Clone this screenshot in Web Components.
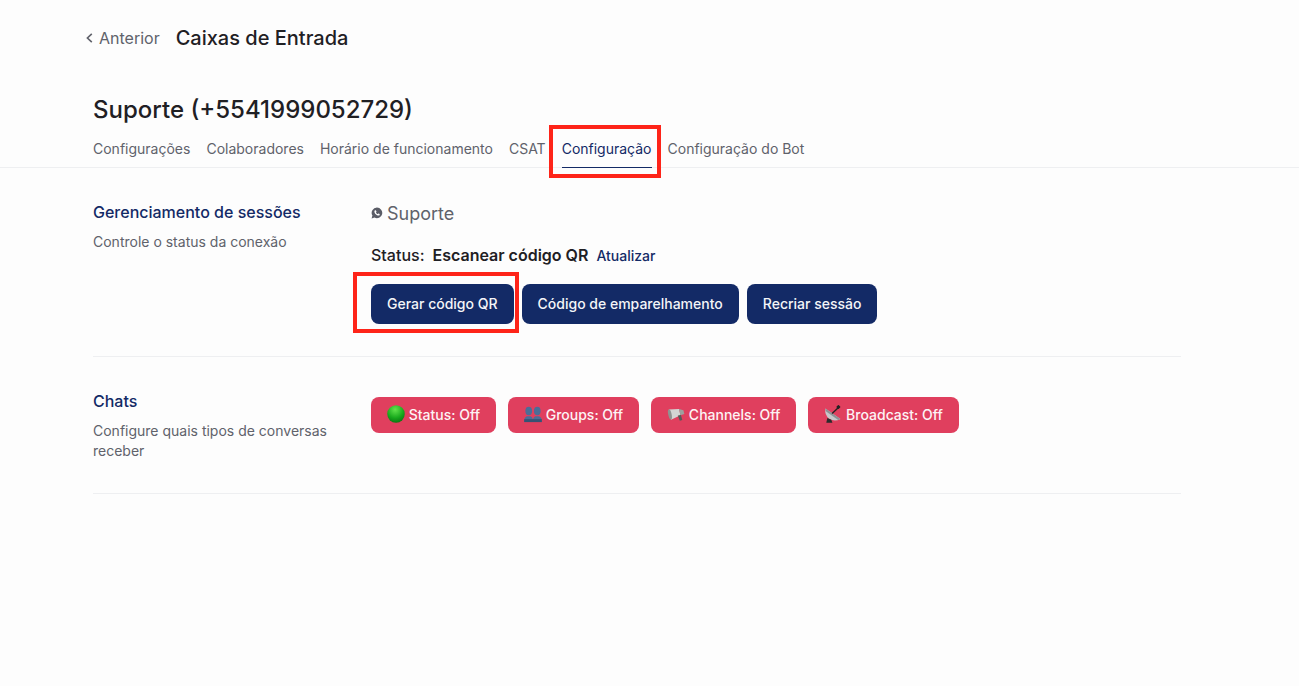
<!DOCTYPE html>
<html lang="pt-BR">
<head>
<meta charset="utf-8">
<title>Caixas de Entrada</title>
<style>
  html, body { margin: 0; height: 100%; }
  body {
    background: #fdfdfd;
    color: #1f2024;
    font-family: Inter, "Noto Sans", sans-serif;
    overflow: hidden;
  }
</style>
</head>
<body>
<inbox-page>
  <page-header back="Anterior" title-text="Caixas de Entrada"></page-header>
  <inbox-title name="Suporte (+5541999052729)"></inbox-title>
  <tab-bar>
    <tab-item>Configurações</tab-item>
    <tab-item>Colaboradores</tab-item>
    <tab-item>Horário de funcionamento</tab-item>
    <tab-item>CSAT</tab-item>
    <tab-item active marked>Configuração</tab-item>
    <tab-item>Configuração do Bot</tab-item>
  </tab-bar>
  <settings-section heading="Gerenciamento de sessões" style="--row-height:189px">
    <span slot="sub">Controle o status da conexão</span>
    <session-panel></session-panel>
  </settings-section>
  <settings-section heading="Chats" style="--row-height:137px">
    <span slot="sub">Configure quais tipos de conversas receber</span>
    <chat-toggles></chat-toggles>
  </settings-section>
</inbox-page>

<script>
class InboxPage extends HTMLElement {
  constructor() {
    super();
    this.attachShadow({ mode: 'open' }).innerHTML = `
      <style>
        :host { display: block; }
      </style>
      <slot></slot>
    `;
  }
}

class PageHeader extends HTMLElement {
  constructor() {
    super();
    this.attachShadow({ mode: 'open' }).innerHTML = `
      <style>
        :host {
          display: flex;
          align-items: center;
          height: 76px;
          padding-left: 85px;
        }
        .back {
          display: flex;
          align-items: center;
          gap: 4px;
          color: #60626b;
          font-size: 16px;
          margin-right: 16px;
        }
        svg { width: 10px; height: 14px; }
        h1 {
          margin: 0;
          font-size: 20px;
          font-weight: 500;
          color: #1f2024;
        }
      </style>
      <div class="back">
        <svg viewBox="0 0 10 14" fill="none" stroke="#60626b" stroke-width="1.6"><path d="M6.8 2.8 L2.4 7 L6.8 11.2"/></svg>
        <span>${this.getAttribute('back')}</span>
      </div>
      <h1>${this.getAttribute('title-text')}</h1>
    `;
  }
}

class InboxTitle extends HTMLElement {
  constructor() {
    super();
    this.attachShadow({ mode: 'open' }).innerHTML = `
      <style>
        :host {
          display: block;
          padding: 18px 0 0 93px;
          height: 37px;
          font-size: 24px;
          line-height: 32px;
          font-weight: 500;
          color: #1f2024;
        }
      </style>
      ${this.getAttribute('name')}
    `;
  }
}

class TabBar extends HTMLElement {
  constructor() {
    super();
    this.attachShadow({ mode: 'open' }).innerHTML = `
      <style>
        :host {
          display: flex;
          gap: 16px;
          height: 36px;
          padding-left: 93px;
          border-bottom: 1px solid #eeeff1;
        }
      </style>
      <slot></slot>
    `;
  }
}

class TabItem extends HTMLElement {
  constructor() {
    super();
    this.attachShadow({ mode: 'open' }).innerHTML = `
      <style>
        :host {
          display: block;
          position: relative;
          font-size: 14px;
          line-height: 20px;
          padding-top: 8px;
          color: #60626b;
        }
        :host([active]) { color: #132a66; }
        :host([active]) .line {
          position: absolute;
          left: 0;
          right: 0;
          bottom: -1px;
          height: 1px;
          background: #132a66;
        }
        mark-box { --inset: -6px -9px -11px -13px; }
      </style>
      <slot></slot>
      <div class="line"></div>
      ${this.hasAttribute('marked') ? '<mark-box></mark-box>' : ''}
    `;
  }
}

// red annotation rectangle drawn over whatever it is placed in
class MarkBox extends HTMLElement {
  constructor() {
    super();
    this.attachShadow({ mode: 'open' }).innerHTML = `
      <style>
        :host {
          position: absolute;
          inset: var(--inset, 0);
          border: 4px solid #fe2419;
          pointer-events: none;
        }
      </style>
    `;
  }
}

class SettingsSection extends HTMLElement {
  constructor() {
    super();
    this.attachShadow({ mode: 'open' }).innerHTML = `
      <style>
        :host {
          display: grid;
          grid-template-columns: 278px 1fr;
          box-sizing: border-box;
          height: var(--row-height);
          margin: 0 118px 0 93px;
          padding-top: 34px;
          border-bottom: 1px solid #eeeff1;
        }
        h2 {
          margin: 0 0 10px;
          font-size: 16px;
          line-height: 20px;
          font-weight: 500;
          color: #132a66;
        }
        .sub {
          width: 250px;
          font-size: 14px;
          line-height: 20px;
          color: #60626b;
        }
      </style>
      <div>
        <h2>${this.getAttribute('heading')}</h2>
        <div class="sub"><slot name="sub"></slot></div>
      </div>
      <div><slot></slot></div>
    `;
  }
}

class ActionButton extends HTMLElement {
  constructor() {
    super();
    this.attachShadow({ mode: 'open' }).innerHTML = `
      <style>
        :host {
          display: inline-flex;
          align-items: center;
          position: relative;
          box-sizing: border-box;
          height: 40px;
          padding: 0 16px 2px;
          border-radius: 8px;
          background: #132a66;
          color: #f4f5f8;
          font-size: 14px;
          font-weight: 500;
          white-space: nowrap;
        }
        mark-box { --inset: -12px -5px -9px -18px; }
      </style>
      <slot></slot>
      ${this.hasAttribute('marked') ? '<mark-box></mark-box>' : ''}
    `;
  }
}

class SessionPanel extends HTMLElement {
  constructor() {
    super();
    this.attachShadow({ mode: 'open' }).innerHTML = `
      <style>
        :host { display: block; }
        .name {
          display: flex;
          align-items: center;
          gap: 4px;
          box-sizing: border-box;
          height: 24px;
          padding-bottom: 2px;
          font-size: 18px;
          color: #60626b;
        }
        svg { width: 12px; height: 12px; }
        .status {
          display: flex;
          align-items: center;
          box-sizing: border-box;
          height: 24px;
          padding-bottom: 2px;
          margin-top: 18px;
          font-size: 16px;
          font-weight: 500;
          color: #1f2024;
        }
        .status b { font-weight: 600; margin-left: 8px; }
        .status a {
          margin-left: 8px;
          font-size: 14px;
          color: #132a66;
        }
        .actions {
          display: flex;
          gap: 8px;
          margin-top: 16px;
        }
      </style>
      <div class="name">
        <svg viewBox="0 0 12 12">
          <path fill="#5a5c66" d="M6 .6a5.3 5.3 0 0 0-4.6 8L.6 11.4l2.9-.8A5.3 5.3 0 1 0 6 .6z"/>
          <path fill="#fdfdfd" d="M4.3 3.2c-.3 0-.9.5-.9 1.3 0 1.9 2.2 4.1 4.2 4.1.8 0 1.2-.7 1.2-1.1 0-.3-1.1-.9-1.3-.9-.2 0-.4.5-.7.5-.6 0-1.7-1.1-1.8-1.7 0-.3.5-.4.5-.7 0-.2-.5-1.5-.8-1.5z"/>
        </svg>
        <span>Suporte</span>
      </div>
      <div class="status">
        <span>Status:</span>
        <b>Escanear código QR</b>
        <a>Atualizar</a>
      </div>
      <div class="actions">
        <action-button marked>Gerar código QR</action-button>
        <action-button>Código de emparelhamento</action-button>
        <action-button>Recriar sessão</action-button>
      </div>
    `;
  }
}

const CHAT_ICONS = {
  status: `<defs><radialGradient id="g" cx=".45" cy=".25" r=".8"><stop offset="0" stop-color="#62e34c"/><stop offset=".6" stop-color="#17a81c"/><stop offset="1" stop-color="#0b6e12"/></radialGradient></defs>
    <circle cx="8" cy="8" r="7.8" fill="url(#g)"/>`,
  groups: `<g fill="#4c6d96"><ellipse cx="4.2" cy="5.4" rx="3" ry="3.8"/><path d="M.2 15.2c0-3.4.6-4.6 2.6-5.2h2.8c2 .6 2.2 1.8 2.2 5.2z"/>
      <ellipse cx="11.8" cy="5.4" rx="3" ry="3.8"/><path d="M8 15.2c0-3.4.4-4.6 2.4-5.2h2.8c2 .6 2.6 1.8 2.6 5.2z"/></g>
    <rect x=".2" y="12.6" width="15.6" height="2.6" fill="#355273"/>`,
  channels: `<path fill="#d3d5d4" d="M1.6 4 L10.6 3.6 L12 9 L3.6 13z"/>
    <ellipse cx="2.6" cy="8.4" rx="1.5" ry="4.6" transform="rotate(-12 2.6 8.4)" fill="#8f9391"/>
    <path fill="#9da19f" d="M10.6 3.6 L14.6 4.6 L15.4 8 L12 9z"/>
    <path fill="#565a58" d="M9.6 9.4 L12.4 8.8 L13.6 13.4 L11.4 14z"/>`,
  broadcast: `<path fill="#c6c8ca" d="M1.2 3.2 Q.4 9 4.6 12.2 Q9.4 15.2 14.6 12.4z"/>
    <path fill="#8f9195" d="M1.2 3.2 L14.6 12.4 L12.6 13.4 L1.6 5.6z"/>
    <path stroke="#222" stroke-width="1.2" d="M7.2 7.6 L12.6 2.4"/>
    <rect x="11.4" y=".4" width="2.8" height="2.8" rx=".6" fill="#222" transform="rotate(45 12.8 1.8)"/>
    <path fill="#2b2b2b" d="M3 11.6 L6.5 13.2 L7.5 15.8 L2 15.8z"/>`
};

class ChatToggle extends HTMLElement {
  constructor() {
    super();
    const icon = CHAT_ICONS[this.getAttribute('icon')];
    this.attachShadow({ mode: 'open' }).innerHTML = `
      <style>
        :host {
          display: inline-flex;
          align-items: center;
          gap: 3.7px;
          box-sizing: border-box;
          height: 36px;
          padding: 0 16px 2px;
          border-radius: 8px;
          background: #e03f5e;
          color: #fdf3f5;
          font-size: 14px;
          font-weight: 500;
          white-space: nowrap;
        }
        svg { width: 18px; height: 18px; flex: none; }
      </style>
      <svg viewBox="0 0 16 16">${icon}</svg>
      <slot></slot>
    `;
  }
}

class ChatToggles extends HTMLElement {
  constructor() {
    super();
    this.attachShadow({ mode: 'open' }).innerHTML = `
      <style>
        :host {
          display: flex;
          gap: 12px;
          margin-top: 6px;
        }
      </style>
      <chat-toggle icon="status">Status: Off</chat-toggle>
      <chat-toggle icon="groups">Groups: Off</chat-toggle>
      <chat-toggle icon="channels">Channels: Off</chat-toggle>
      <chat-toggle icon="broadcast">Broadcast: Off</chat-toggle>
    `;
  }
}

customElements.define('inbox-page', InboxPage);
customElements.define('page-header', PageHeader);
customElements.define('inbox-title', InboxTitle);
customElements.define('tab-bar', TabBar);
customElements.define('tab-item', TabItem);
customElements.define('mark-box', MarkBox);
customElements.define('settings-section', SettingsSection);
customElements.define('action-button', ActionButton);
customElements.define('session-panel', SessionPanel);
customElements.define('chat-toggle', ChatToggle);
customElements.define('chat-toggles', ChatToggles);
</script>
</body>
</html>
